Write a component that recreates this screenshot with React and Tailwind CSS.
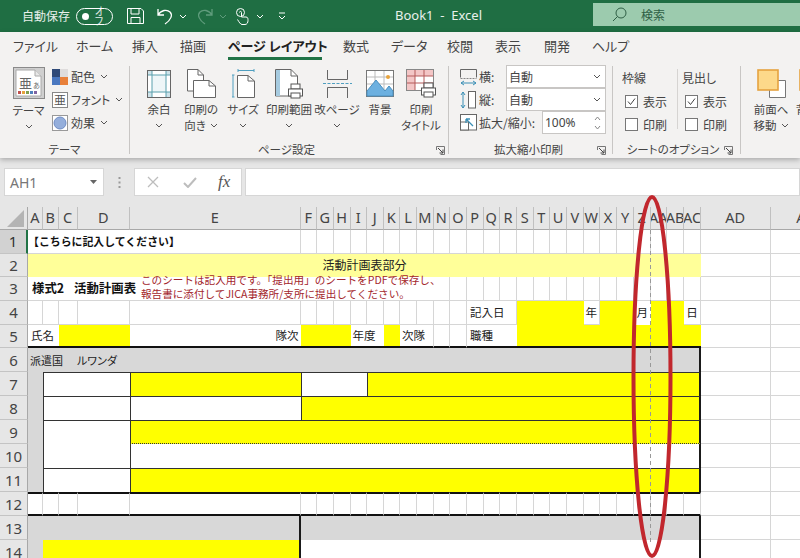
import React from "react";

const Chev = ({ c = "#555" }) => (
  <svg width="8" height="5" viewBox="0 0 8 5" className="shrink-0"><path d="M1 1l3 3 3-3" fill="none" stroke={c} strokeWidth="1" /></svg>
);

const Launcher = () => (
  <svg width="9" height="9" viewBox="0 0 9 9" className="shrink-0">
    <path d="M.5 4V.5H8.5V8.5H4.5" fill="none" stroke="#777" strokeWidth="1" />
    <path d="M2 2l5 5M7 3.5V7H3.5" fill="none" stroke="#444" strokeWidth="1" />
  </svg>
);

const Printer = ({ x, y }) => (
  <g transform={`translate(${x} ${y})`}>
    <rect x="3" y="0" width="9" height="5" fill="#fff" stroke="#555" />
    <rect x="0.5" y="5" width="14" height="7" fill="#fff" stroke="#555" />
    <rect x="3" y="9" width="9" height="5" fill="#fff" stroke="#555" />
  </g>
);

const IThemes = () => (
  <svg width="32" height="32" viewBox="0 0 32 32">
    <rect x=".5" y=".5" width="31" height="31" fill="#cfcfcf" stroke="#8a8a8a" />
    <path d="M3 3H22L28 9V29H3Z" fill="#fff" stroke="#aaa" />
    <path d="M22 3V9H28" fill="#e8e8e8" stroke="#aaa" />
    <text x="6" y="21" fontSize="13" fill="#666">亜</text>
    <text x="20" y="21" fontSize="7" fill="#666">あ</text>
    <rect x="5" y="24" width="3" height="3" fill="#c0504d" />
    <rect x="9" y="24" width="3" height="3" fill="#e6a23c" />
    <rect x="13" y="24" width="3" height="3" fill="#7f9f4f" />
    <rect x="17" y="24" width="3" height="3" fill="#4f81bd" />
    <rect x="21" y="24" width="3" height="3" fill="#8064a2" />
  </svg>
);
const IColors = () => (
  <svg width="16" height="16" viewBox="0 0 16 16">
    <rect width="8" height="8" fill="#2f4a78" /><rect x="8" width="8" height="8" fill="#dedcdc" />
    <rect y="8" width="8" height="8" fill="#4a78c0" /><rect x="8" y="8" width="8" height="8" fill="#e8803a" />
  </svg>
);
const IFont = () => (
  <svg width="16" height="16" viewBox="0 0 16 16">
    <rect x=".5" y=".5" width="15" height="15" fill="#fff" stroke="#888" />
    <text x="2" y="13" fontSize="12" fill="#555">亜</text>
  </svg>
);
const IEffect = () => (
  <svg width="16" height="16" viewBox="0 0 16 16">
    <rect x=".5" y=".5" width="15" height="15" fill="#fff" stroke="#999" />
    <circle cx="8" cy="8" r="6" fill="#94aedb" stroke="#6f8cc4" />
  </svg>
);
const IMargin = () => (
  <svg width="24" height="28" viewBox="0 0 24 28">
    <rect x=".5" y=".5" width="23" height="27" fill="#fff" stroke="#666" />
    <path d="M5 5H19V22H5Z" fill="#eef6f8" />
    <rect x="1" y="1" width="4" height="4" fill="#cfe3ea" /><rect x="19" y="1" width="4" height="4" fill="#cfe3ea" />
    <rect x="1" y="22" width="4" height="5" fill="#cfe3ea" /><rect x="19" y="22" width="4" height="5" fill="#cfe3ea" />
    <path d="M5 1V27M19 1V27M1 5H23M1 22H23" stroke="#5aa0ad" strokeWidth="1" />
  </svg>
);
const IOrient = () => (
  <svg width="29" height="29" viewBox="0 0 29 29">
    <path d="M.5.5H11L16.5 6V22H.5Z" fill="#fff" stroke="#666" />
    <path d="M11 .5V6H16.5" fill="none" stroke="#666" />
    <path d="M6.5 11.5H22L28.5 17V28.5H6.5Z" fill="#fff" stroke="#666" />
    <path d="M22 11.5V17H28.5" fill="none" stroke="#666" />
  </svg>
);
const ISize = () => (
  <svg width="23" height="29" viewBox="0 0 23 29">
    <path d="M6 1.5H22M6 0V3M22 0V3M1 6V28M0 6H2.5M0 28H2.5" fill="none" stroke="#4f9fc0" />
    <path d="M5.5 6.5H16L22.5 12V28.5H5.5Z" fill="#fff" stroke="#666" />
    <path d="M16 6.5V12H22.5" fill="none" stroke="#666" />
  </svg>
);
const IArea = () => (
  <svg width="28" height="30" viewBox="0 0 28 30">
    <path d="M.5.5H16L22.5 7V27H.5Z" fill="#fff" stroke="#666" />
    <path d="M16 .5V7H22.5" fill="none" stroke="#666" />
    <rect x="1" y="1" width="4" height="26" fill="#a6cbe0" />
    <Printer x="13" y="15" />
  </svg>
);
const IBreak = () => (
  <svg width="29" height="28" viewBox="0 0 29 28">
    <path d="M4.5 0V9.5H24.5V0M4.5 28V17.5H24.5V28" fill="none" stroke="#666" />
    <path d="M0 13.5H29" stroke="#4f9fc0" strokeDasharray="3 1.5" />
  </svg>
);
const IBg = () => (
  <svg width="28" height="27" viewBox="0 0 28 27">
    <rect x=".5" y=".5" width="27" height="26" fill="#fff" stroke="#777" />
    <path d="M1 7H27M1 14H27M9 1V26M18 1V26" stroke="#bbb" />
    <circle cx="22" cy="7" r="2" fill="#e8a33d" />
    <path d="M1 21L10 10L19 21L23 16L27 21V26H1Z" fill="#6cb0e0" stroke="#4a90c0" />
  </svg>
);
const ITitles = () => (
  <svg width="31" height="29" viewBox="0 0 31 29">
    <rect x=".5" y=".5" width="27" height="21" fill="#fff" stroke="#888" />
    <rect x="1" y="1" width="26" height="6" fill="#f3c6c6" />
    <rect x="1" y="7" width="8" height="14" fill="#f3c6c6" />
    <path d="M9 1V21M18 1V21M1 7H27M1 14H27" stroke="#b55a5a" />
    <Printer x="15" y="14" />
  </svg>
);
const IWidth = () => (
  <svg width="17" height="18" viewBox="0 0 17 18">
    <path d="M.5 1.5H16.5M.5 9.5V1.5M16.5 9.5V1.5" fill="none" stroke="#666" />
    <path d="M.5 10.5H16.5" stroke="#888" strokeDasharray="2 1" />
    <path d="M1 15H16M1 15l3-2M1 15l3 2M16 15l-3-2M16 15l-3 2" fill="none" stroke="#3a8fb5" />
  </svg>
);
const IHeight = () => (
  <svg width="17" height="18" viewBox="0 0 17 18">
    <path d="M3 1V17M3 1l-2 3M3 1l2 3M3 17l-2-3M3 17l2-3" fill="none" stroke="#3a8fb5" />
    <rect x="8.5" y=".5" width="7" height="16.5" fill="#fff" stroke="#666" />
  </svg>
);
const IScale = () => (
  <svg width="17" height="17" viewBox="0 0 17 17">
    <rect x=".5" y=".5" width="16" height="15.5" fill="#fff" stroke="#666" />
    <rect x=".5" y="8" width="8" height="8" fill="#fff" stroke="#666" />
    <path d="M13 12L6 5M6 5V9M6 5H10" fill="none" stroke="#3a8fb5" strokeWidth="1.3" />
  </svg>
);
const Check = ({ on }) => (
  <svg width="13" height="13" viewBox="0 0 13 13" className="shrink-0">
    <rect x=".5" y=".5" width="12" height="12" fill="#fff" stroke="#777" />
    {on && <path d="M3 6.5l2.5 3L10 3.5" fill="none" stroke="#444" />}
  </svg>
);
const IFront = () => (
  <svg width="29" height="29" viewBox="0 0 29 29">
    <path d="M12.5 11.5H28.5V28.5H12.5Z" fill="#fff" stroke="#777" />
    <rect x="1" y="1" width="20" height="20" fill="#fdd98a" stroke="#e5a23f" strokeWidth="1.6" />
  </svg>
);

const RibbonBtn = ({ w, icon, l1, l2, chev }) => (
  <div className={`${w} shrink-0 flex flex-col items-center`}>
    <div className="h-[35px] flex items-center justify-center">{icon}</div>
    <div className="h-4 leading-4 whitespace-nowrap flex items-center gap-1">{l1}</div>
    <div className="h-4 leading-4 whitespace-nowrap flex items-center justify-center gap-1">{l2}{chev && <Chev />}</div>
  </div>
);

const SmallItem = ({ icon, label }) => (
  <div className="h-[23px] flex items-center gap-[3px] whitespace-nowrap text-[12px]">
    {icon}<span>{label}</span><span className="ml-[2px]"><Chev /></span>
  </div>
);

const GroupLabel = ({ children, launch, extra = "" }) => (
  <div className={`h-[18px] flex items-center -mt-[2px] mb-[-5px] ${extra}`}>
    <div className="flex-1 text-center whitespace-nowrap">{children}</div>
    {launch && <Launcher />}
  </div>
);

const tabs = [
  ["ファイル", "w-[63px]"], ["ホーム", "w-[56px]"], ["挿入", "w-[48px]"], ["描画", "w-[48px]"],
  ["ページ レイアウト", "w-[115px]"], ["数式", "w-[48px]"], ["データ", "w-[56px]"], ["校閲", "w-[48px]"],
  ["表示", "w-[49px]"], ["開発", "w-[48px]"], ["ヘルプ", "w-[48px]"],
];

const gridCell = "border-r border-b border-[#d6d6d6]";
const plain = (n, p) => Array.from({ length: n }, (_, i) => <div key={`${p}-${i}`} className={gridCell} />);
const txt = "flex items-center whitespace-nowrap overflow-visible";

const Head = ({ n, sel }) => (
  <div className={`flex items-center justify-center text-[15px] font-['Noto_Sans',sans-serif] border-b border-[#c4c4c4] ${sel ? "bg-[#d2d2d2] border-r-2 border-r-[#217346] text-[#333]" : "bg-[#e6e6e6] border-r border-r-[#a8a8a8] text-[#444]"}`}>{n}</div>
);

const columns = ["A","B","C","D","E","F","G","H","I","J","K","L","M","N","O","P","Q","R","S","T","U","V","W","X","Y","Z","AA","AB","AC","AD","AE"];

const yellow = "bg-[#ffff00]";
const gray = "bg-[#d8d8d8]";
const line = "border-t border-l border-[#333]";
const edge = "border-r-2 border-r-[#1a1a1a]";

export default function App() {
  return (
    <div className="relative w-[800px] h-[558px] overflow-hidden bg-[#e6e6e6] font-['Noto_Sans_CJK_JP','Noto_Sans',sans-serif] text-[#444]">
      {/* Title bar */}
      <div className="h-[32px] bg-[#1f6e43] flex items-center text-white/90 text-[12px] [font-feature-settings:'palt']">
        <span className="ml-[22px] w-[54px] whitespace-nowrap">自動保存</span>
        <div className="w-[37px] h-[17px] rounded-full border border-white flex items-center pl-[5px] gap-[6px] text-[10px] leading-none">
          <span className="w-[7px] h-[7px] rounded-full bg-white" /><span>オフ</span>
        </div>
        <svg className="ml-[14px]" width="17" height="16" viewBox="0 0 17 16">
          <path d="M.5.5H14L16.5 3V15.5H.5Z M4 .5V6H12V.5M4 15.5V9.5H13V15.5" fill="none" stroke="#fff" />
        </svg>
        <svg className="ml-[12px]" width="18" height="17" viewBox="0 0 18 17">
          <path d="M2 1V7H8M2 7C5 2 11 1 14 4C17 7 15 12 9 16" fill="none" stroke="#fff" strokeWidth="1.3" />
        </svg>
        <span className="ml-[5px]"><Chev c="#fff" /></span>
        <svg className="ml-[9px]" width="18" height="17" viewBox="0 0 18 17">
          <path d="M16 1V7H10M16 7C13 2 7 1 4 4C1 7 3 12 9 16" fill="none" stroke="#5f9c7c" strokeWidth="1.3" />
        </svg>
        <span className="ml-[5px]"><Chev c="#5f9c7c" /></span>
        <svg className="ml-[8px]" width="14" height="17" viewBox="0 0 14 17">
          <circle cx="5.5" cy="4.5" r="4" fill="none" stroke="#fff" />
          <path d="M4.5 4.5C4.5 3 6.5 3 6.5 4.5V9H11C13 9 13 11 13 12.5C13 14.5 12 16.5 10 16.5H7C5.5 16.5 4 14 2.5 11.5" fill="none" stroke="#fff" />
        </svg>
        <span className="ml-[7px]"><Chev c="#fff" /></span>
        <svg className="ml-[14px]" width="8" height="8" viewBox="0 0 8 8">
          <path d="M1 1H7M1 4l3 3 3-3" fill="none" stroke="#fff" />
        </svg>
        <span className="ml-[109px] w-[198px] text-[13px] whitespace-pre font-['Noto_Sans',sans-serif]">Book1  -  Excel</span>
        <div className="flex-1 h-[23px] -mt-[3px] bg-[#9ccbae] flex items-center text-[#2f5f45]">
          <svg className="ml-[19px]" width="15" height="15" viewBox="0 0 15 15">
            <circle cx="9" cy="6" r="5" fill="none" stroke="#2f5f45" /><path d="M5.5 9.5L1 14" stroke="#2f5f45" />
          </svg>
          <span className="ml-[14px]">検索</span>
        </div>
      </div>

      {/* Ribbon */}
      <div className="relative z-10 h-[126px] bg-[#f3f2f1] shadow-[0_2px_5px_rgba(0,0,0,0.25)] [font-feature-settings:'palt']">
        <div className="h-[30px] flex pl-[13px] text-[13px] text-[#444]">
          {tabs.map(([t, w], i) => (
            <div key={t} className={`${w} shrink-0 h-full flex items-start pt-[4px] whitespace-nowrap`}>
              {i === 4 ? <span className="font-bold text-[#222] h-[24px] border-b-[3px] border-[#217346] w-[94px] text-[13px]">{t}</span> : t}
            </div>
          ))}
        </div>
        <div className="h-[96px] flex text-[11.5px] text-[#444]">
          {/* テーマ */}
          <div className="w-[130px] shrink-0 flex flex-col border-r border-[#c8c6c4] mt-[4px] mb-[4px]">
            <div className="flex-1 flex">
              <div className="w-[45px] ml-[6px] flex flex-col items-center pt-[1px]">
                <IThemes />
                <div className="h-4 leading-4 mt-[3px] whitespace-nowrap">テーマ</div>
                <div className="h-4 flex items-center"><Chev /></div>
              </div>
              <div className="ml-[1px] -mt-[1px]">
                <SmallItem icon={<IColors />} label="配色" />
                <SmallItem icon={<IFont />} label="フォント" />
                <SmallItem icon={<IEffect />} label="効果" />
              </div>
            </div>
            <GroupLabel>テーマ</GroupLabel>
          </div>
          {/* ページ設定 */}
          <div className="w-[319px] shrink-0 flex flex-col border-r border-[#c8c6c4] mt-[4px] mb-[4px] pl-[7px] pr-[3px]">
            <div className="flex-1 flex">
              <RibbonBtn w="w-[44px]" icon={<IMargin />} l1="余白" l2="" chev />
              <RibbonBtn w="w-[40px]" icon={<IOrient />} l1="印刷の" l2="向き" chev />
              <RibbonBtn w="w-[44px]" icon={<ISize />} l1="サイズ" l2="" chev />
              <RibbonBtn w="w-[48px]" icon={<IArea />} l1="印刷範囲" l2="" chev />
              <RibbonBtn w="w-[48px]" icon={<IBreak />} l1="改ページ" l2="" chev />
              <RibbonBtn w="w-[38px]" icon={<IBg />} l1="背景" l2="" />
              <RibbonBtn w="w-[44px]" icon={<ITitles />} l1="印刷" l2="タイトル" />
            </div>
            <GroupLabel launch>ページ設定</GroupLabel>
          </div>
          {/* 拡大縮小印刷 */}
          <div className="w-[164px] shrink-0 flex flex-col border-r border-[#c8c6c4] mt-[4px] mb-[4px] pl-[11px] pr-[6px]">
            <div className="flex-1 -mt-[1px]">
              <div className="h-[23px] flex items-center">
                <IWidth /><span className="ml-[2px] text-[12px]">横:</span>
                <div className="ml-auto w-[100px] h-[23px] bg-white border border-[#c8c6c4] flex items-center justify-between pl-[2px] pr-[4px] text-[12px]">自動<Chev /></div>
              </div>
              <div className="h-[23px] flex items-center">
                <IHeight /><span className="ml-[2px] text-[12px]">縦:</span>
                <div className="ml-auto w-[100px] h-[23px] bg-white border border-[#c8c6c4] flex items-center justify-between pl-[2px] pr-[4px] text-[12px]">自動<Chev /></div>
              </div>
              <div className="h-[23px] flex items-center">
                <IScale /><span className="ml-[2px] text-[12px] whitespace-nowrap">拡大/縮小:</span>
                <div className="ml-auto w-[64px] h-[23px] bg-white border border-[#c8c6c4] flex items-center justify-between pl-[2px] pr-[4px] text-[12px] font-['Noto_Sans',sans-serif]">100%
                  <svg width="7" height="14" viewBox="0 0 7 14"><path d="M1 4l2.5-3L6 4M1 10l2.5 3L6 10" fill="none" stroke="#888" /></svg>
                </div>
              </div>
            </div>
            <GroupLabel launch>拡大縮小印刷</GroupLabel>
          </div>
          {/* シートのオプション */}
          <div className="w-[128px] shrink-0 flex flex-col border-r border-[#c8c6c4] mt-[4px] mb-[4px] pl-[9px] pr-[6px]">
            <div className="flex-1 flex pt-[3px] text-[12px]">
              <div className="w-[56px] border-r border-[#d6d4d2] h-[60px]">
                <div className="h-[18px] leading-[18px]">枠線</div>
                <div className="h-[23px] flex items-center gap-[5px] ml-[3px] mt-[3px]"><Check on />表示</div>
                <div className="h-[23px] flex items-center gap-[5px] ml-[3px]"><Check />印刷</div>
              </div>
              <div className="pl-[4px]">
                <div className="h-[18px] leading-[18px]">見出し</div>
                <div className="h-[23px] flex items-center gap-[5px] ml-[3px] mt-[3px]"><Check on />表示</div>
                <div className="h-[23px] flex items-center gap-[5px] ml-[3px]"><Check />印刷</div>
              </div>
            </div>
            <GroupLabel launch extra="pr-[1px]">シートのオプション</GroupLabel>
          </div>
          {/* 配置 */}
          <div className="shrink-0 flex pl-[9px] mt-[4px]">
            <RibbonBtn w="w-[42px]" icon={<IFront />} l1="前面へ" l2="移動" chev />
            <RibbonBtn w="w-[42px]" icon={<svg width="29" height="29" viewBox="0 0 29 29"><rect x="1" y="1" width="20" height="20" fill="#fdd98a" stroke="#e5a23f" strokeWidth="1.6" /></svg>} l1="背面へ" l2="移動" />
          </div>
        </div>
      </div>

      {/* Formula bar */}
      <div className="h-[49px] pt-[10px] flex items-start text-[#777]">
        <div className="ml-[4px] w-[100px] h-[28px] bg-white border border-[#d6d6d6] flex items-center justify-between pl-[5px] pr-[6px] text-[14px] font-['Noto_Sans',sans-serif]">
          AH1
          <svg width="7" height="4" viewBox="0 0 7 4"><path d="M0 0H7L3.5 4Z" fill="#666" /></svg>
        </div>
        <div className="w-[30px] h-[28px] flex items-center justify-center">
          <svg width="3" height="11" viewBox="0 0 3 11"><path d="M1.5 0V2M1.5 4.5V6.5M1.5 9V11" stroke="#999" strokeWidth="2" /></svg>
        </div>
        <div className="w-[108px] h-[28px] bg-white border border-[#d6d6d6] flex items-center pl-[12px]">
          <svg width="12" height="12" viewBox="0 0 12 12"><path d="M1 1L11 11M11 1L1 11" stroke="#bdbdbd" strokeWidth="1.3" /></svg>
          <svg className="ml-[24px]" width="14" height="11" viewBox="0 0 14 11"><path d="M1 6L5 10L13 1" fill="none" stroke="#bdbdbd" strokeWidth="2" /></svg>
          <span className="ml-[21px] text-[17px] italic text-[#555] font-['Liberation_Serif',serif]">fx</span>
        </div>
        <div className="ml-[3px] flex-1 h-[28px] bg-white border border-[#d6d6d6]" />
      </div>

      {/* Sheet */}
      <div className="relative bg-white grid grid-cols-[28px_15px_15.5px_19px_52.5px_170.5px_16.5px_16.5px_17px_16.5px_16.5px_16.5px_17px_16.5px_16.5px_17px_16.5px_16.5px_17px_16.5px_16.5px_17px_16.5px_16.5px_17px_17px_16.5px_16.5px_17px_17px_69.5px_70px] grid-rows-[23px_repeat(5,23.7px)_repeat(9,24px)] text-[11.5px] text-[#222]">
        {/* Column heads */}
        <div className="bg-[#e6e6e6] border-r border-b border-[#a8a8a8] flex items-end justify-end pr-[3px] pb-[2px]">
          <svg width="17" height="17" viewBox="0 0 17 17"><path d="M17 0V17H0Z" fill="#b4b4b4" /></svg>
        </div>
        {columns.map((c) => (
          <div key={c} className="bg-[#e6e6e6] border-r border-r-[#c0c0c0] border-b border-b-[#a8a8a8] flex items-center justify-center overflow-hidden whitespace-nowrap text-[14.5px] text-[#444] font-['Noto_Sans',sans-serif]">{c}</div>
        ))}

        {/* 1 */}
        <Head n="1" sel />
        <div className={`col-span-5 ${gridCell} ${txt} font-bold text-[10.9px] text-[#111]`}>【こちらに記入してください】</div>
        {plain(26, "r1")}

        {/* 2 */}
        <Head n="2" />
        <div className="col-span-29 bg-[#ffff99] flex items-center justify-center text-[12px] pb-[2px]">活動計画表部分</div>
        {plain(2, "r2")}

        {/* 3 */}
        <Head n="3" />
        <div className={`col-span-14 ${gridCell} ${txt} font-bold text-[12.4px] text-[#111] pl-[4px]`}>様式2<span className="ml-[10px]">活動計画表</span></div>
        {plain(17, "r3")}

        {/* 4 */}
        <Head n="4" />
        {plain(15, "r4a")}
        <div className={`col-span-3 ${gridCell} ${txt} pl-[3px]`}>記入日</div>
        <div className={`col-span-4 ${yellow}`} />
        <div className={`${gridCell} ${txt} justify-center`}>年</div>
        <div className={`col-span-2 ${yellow}`} />
        <div className={`${txt} justify-center`}>月</div>
        <div className={`col-span-2 ${yellow}`} />
        <div className={`${gridCell} ${txt} justify-center`}>日</div>
        {plain(2, "r4b")}

        {/* 5 */}
        <Head n="5" />
        <div className={`col-span-2 ${txt} pl-[3px] border-b-2 border-[#111]`}>氏名</div>
        <div className={`col-span-2 ${yellow} border-b-2 border-[#111]`} />
        <div className={`${txt} justify-end pr-[2px] border-b-2 border-[#111]`}>隊次</div>
        <div className={`col-span-3 ${yellow} border-b-2 border-[#111]`} />
        <div className={`col-span-2 ${txt} pl-[2px] border-b-2 border-[#111]`}>年度</div>
        <div className={`${yellow} border-b-2 border-[#111]`} />
        <div className={`col-span-2 ${txt} pl-[2px] border-r border-r-[#d6d6d6] border-b-2 border-b-[#111]`}>次隊</div>
        <div className="border-r border-r-[#d6d6d6] border-b-2 border-b-[#111]" />
        <div className="border-r border-r-[#d6d6d6] border-b-2 border-b-[#111]" />
        <div className={`col-span-3 ${txt} pl-[3px] border-b-2 border-[#111]`}>職種</div>
        <div className={`col-span-11 ${yellow} border-b-2 border-[#111]`} />
        {plain(2, "r5")}

        {/* 6 */}
        <Head n="6" />
        <div className={`col-span-29 ${gray} ${edge} ${txt} text-[11px] pl-[2px] [font-feature-settings:'palt']`}>派遣国<span className="ml-[14px]">ルワンダ</span></div>
        {plain(2, "r6")}

        {/* 7 */}
        <Head n="7" />
        <div className={`row-span-5 ${gray}`} />
        <div className={`col-span-3 bg-white ${line}`} />
        <div className={`${yellow} ${line}`} />
        <div className={`col-span-4 bg-white ${line}`} />
        <div className={`col-span-20 ${yellow} ${line} ${edge}`} />
        {plain(2, "r7")}

        {/* 8 */}
        <Head n="8" />
        <div className={`col-span-3 bg-white ${line}`} />
        <div className={`bg-white ${line}`} />
        <div className={`col-span-24 ${yellow} ${line} ${edge}`} />
        {plain(2, "r8")}

        {/* 9 */}
        <Head n="9" />
        <div className={`col-span-3 row-span-2 bg-white ${line}`} />
        <div className={`col-span-25 ${yellow} ${line} ${edge} border-b border-b-[#333] [border-bottom-style:dotted]`} />
        {plain(2, "r9")}

        {/* 10 */}
        <Head n="10" />
        <div className={`col-span-25 bg-white border-l border-l-[#333] ${edge}`} />
        {plain(2, "r10")}

        {/* 11 */}
        <Head n="11" />
        <div className={`col-span-3 bg-white ${line}`} />
        <div className={`col-span-25 ${yellow} ${line} ${edge}`} />
        {plain(2, "r11")}

        {/* 12 */}
        <Head n="12" />
        {Array.from({ length: 29 }, (_, i) => (
          <div key={i} className="border-r border-r-[#d6d6d6] border-t-2 border-t-[#111] border-b-2 border-b-[#111]" />
        ))}
        {plain(2, "r12")}

        {/* 13 */}
        <Head n="13" />
        <div className={`col-span-5 ${gray} ${edge}`} />
        <div className={`col-span-24 ${gray} ${edge}`} />
        {plain(2, "r13")}

        {/* 14 */}
        <Head n="14" />
        <div className={gray} />
        <div className={`col-span-4 ${yellow} ${edge}`} />
        <div className={`col-span-24 bg-white ${edge}`} />
        {plain(2, "r14")}

        {/* Text box lying over rows 2 and 3 */}
        <div className="absolute left-[141px] top-[65.5px] text-[10.6px] leading-[14px] text-[#a3262c] whitespace-nowrap">
          <div>このシートは記入用です。「提出用」のシートをPDFで保存し、</div>
          <div>報告書に添付してJICA事務所/支所に提出してください。</div>
        </div>

        {/* Page break line and hand-drawn ellipse */}
        <svg className="absolute left-0 top-[-35px] pointer-events-none" width="800" height="386" viewBox="0 0 800 386">
          <path d="M650.5 58V373" stroke="#999" strokeWidth="1" strokeDasharray="4 3" />
          <ellipse cx="652" cy="204.5" rx="18.5" ry="179.5" fill="none" stroke="#c1272d" strokeWidth="4" />
        </svg>
      </div>
    </div>
  );
}
